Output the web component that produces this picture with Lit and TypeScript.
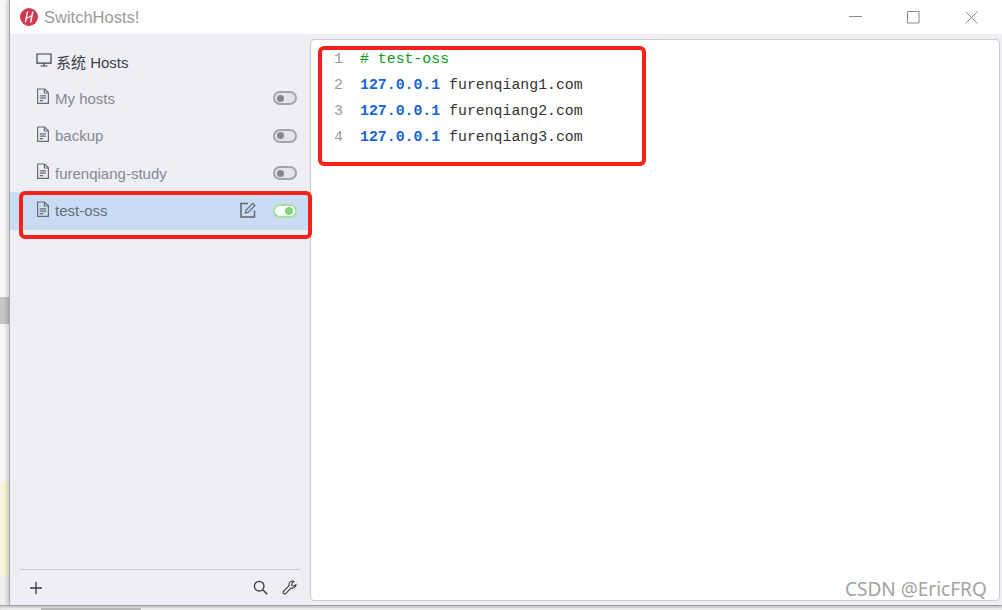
import { LitElement, html, css } from "lit";
import { customElement } from "lit/decorators.js";

const fileIcon = html`<svg class="ficon" viewBox="0 0 14 17" width="14" height="17" fill="none" stroke="currentColor" stroke-width="1.2"><path d="M1.6 1h7l3.8 3.800v10.600H1.600z"/><path d="M8.400 1v4h4M3.800 7.800h6.200M3.800 10.200h6.200M3.800 12.600h3.400"/></svg>`;

const hosts = [
  { name: "My hosts", on: false },
  { name: "backup", on: false },
  { name: "furenqiang-study", on: false },
  { name: "test-oss", on: true },
];

@customElement("app-root")
export class AppRoot extends LitElement {
  static styles = css`
    :host {
      display: block;
      position: relative;
      width: 1002px;
      height: 610px;
      overflow: hidden;
      background: #f1f1f1;
      font-family: "Liberation Sans", Arial, "Noto Sans CJK SC", sans-serif;
    }
    .desk { display: flex; height: 605px; }
    .strip { width: 9px; display: flex; flex-direction: column; flex: none; }
    .s1 { height: 297px; background: #f8f8f8; }
    .s2 { height: 27px; background: #c6c6c6; }
    .s3 { height: 158px; background: #f8f8f8; }
    .s4 { height: 94px; background: #f7f7dc; }
    .s5 { flex: 1; background: #efefef; }
    .window {
      flex: 1;
      display: flex;
      flex-direction: column;
      border-left: 1px solid #a8a8a8;
      background: #eeeff4;
      min-width: 0;
      box-shadow: -2px 0 4px rgba(0, 0, 0, 0.18);
    }
    .titlebar {
      height: 34px;
      flex: none;
      background: #fff;
      display: flex;
      align-items: center;
      padding-left: 10px;
      color: #9a9a9a;
      font-size: 16.5px;
    }
    .logo { margin-right: 6px; flex: none; }
    .tname { flex: 1; }
    .wctl { display: flex; align-items: center; color: #8a8a8a; }
    .wctl svg { display: block; }
    .wbtn { width: 58px; display: flex; justify-content: center; }
    .wbtn.close { width: 59px; margin-right: 1px; }
    .body { flex: 1; display: flex; min-height: 0; }
    .side {
      width: 300px;
      flex: none;
      display: flex;
      flex-direction: column;
      color: #868890;
    }
    .system {
      height: 36.5px;
      margin-top: 9px;
      padding-left: 26px;
      display: flex;
      align-items: center;
      color: #3e4048;
      font-size: 15px;
      gap: 4px;
    }
    .system svg { flex: none; margin-top: -3px; }
    .list { flex: 1; display: flex; flex-direction: column; }
    .row {
      height: 37.5px;
      padding: 0 13px 0 26px;
      display: flex;
      align-items: center;
      font-size: 15px;
    }
    .row.sel { background: #c9dcf3; color: #6a6e78; }
    .ficon { flex: none; color: #6a6c74; margin: -3px 5px 0 0; }
    .rname { flex: 1; }
    .edit { margin: -1px 17px 0 0; color: #5e6670; display: block; }
    .sw {
      width: 24px;
      height: 14px;
      box-sizing: border-box;
      border: 2px solid #a3a4a8;
      background: #e4e4e6;
      border-radius: 7px;
      display: flex;
      align-items: center;
      padding: 0 2px;
    }
    .sw i { width: 7px; height: 7px; border-radius: 50%; background: #86878c; }
    .sw.on {
      border-color: #a5e09a;
      background: #fff;
      justify-content: flex-end;
    }
    .sw.on i { background: #82d478; width: 8px; height: 8px; }
    .foot {
      margin: 0 10px;
      height: 35px;
      border-top: 1px solid #c9c9cc;
      display: flex;
      align-items: center;
      color: #3a3a3a;
      padding: 0 3px 0 9px;
      gap: 14px;
    }
    .foot .grow { flex: 1; }
    .foot svg { display: block; }
    .editor {
      flex: 1;
      margin: 5px 2px 4px 0;
      background: #fff;
      border: 1px solid #cbcbcf;
      border-radius: 4px;
      padding-top: 6px;
      font-family: "Liberation Mono", "DejaVu Sans Mono", monospace;
      font-size: 14.85px;
      min-width: 0;
    }
    .line { height: 26px; line-height: 26px; white-space: pre; color: #333; display: flex; }
    .num { width: 32px; text-align: right; color: #999; flex: none; margin-right: 17px; }
    .ip { color: #1565d8; font-weight: bold; margin-right: 8.9px; }
    .cm { color: #0a9a1a; }
    .under { height: 5px; background: #f1f1f1; border-top: 1px solid #a9a9a9; box-sizing: border-box; box-shadow: inset 0 2px 2px #d0d0d0; }
    .under i { display: block; margin: 2px 0 0 41px; width: 100px; height: 3px; background: #b8b8b8; }
    .red {
      position: absolute;
      box-sizing: border-box;
      border: 4px solid #f6221a;
      border-radius: 6px;
      pointer-events: none;
    }
    .r1 { left: 318px; top: 46px; width: 328px; height: 120px; }
    .r2 { left: 19px; top: 191px; width: 293px; height: 48px; }
    .mark {
      position: absolute;
      left: 845px;
      top: 576px;
      font-family: "Noto Sans", sans-serif;
      font-size: 19px;
      color: #a3a3a3;
      white-space: nowrap;
    }
  `;

  render() {
    const lines = [1, 2, 3].map((n) => `furenqiang${n}.com`);
    return html`
      <div class="desk">
        <div class="strip">
          <div class="s1"></div><div class="s2"></div><div class="s3"></div><div class="s4"></div><div class="s5"></div>
        </div>
        <div class="window">
          <div class="titlebar">
            <svg class="logo" width="18" height="18" viewBox="0 0 18 18">
              <circle cx="9" cy="9" r="9" fill="#cf3a50"/>
              <path d="M7.600 3.400 5.400 14.400M12.800 3.600l-2.200 11M5.200 11l7.800-4" fill="none" stroke="#fff" stroke-width="1.400"/>
            </svg>
            <span class="tname">SwitchHosts!</span>
            <div class="wctl">
              <div class="wbtn"><svg width="13" height="13" viewBox="0 0 13 13"><path d="M0 5.500h13" stroke="currentColor" fill="none"/></svg></div>
              <div class="wbtn"><svg width="13" height="13" viewBox="0 0 13 13"><path d="M.5.5h11.500v11.500H.5z" stroke="currentColor" fill="none"/></svg></div>
              <div class="wbtn close"><svg width="13" height="13" viewBox="0 0 13 13"><path d="M.5.5l12 12M12.500.5l-12 12" stroke="currentColor" fill="none"/></svg></div>
            </div>
          </div>
          <div class="body">
            <div class="side">
              <div class="system">
                <svg width="16" height="14" viewBox="0 0 16 14" fill="none" stroke="currentColor" stroke-width="1.2"><path d="M1 1h14v9.200H1zM8 10.200v2.600M4.500 13h7"/></svg>
                <span>系统 Hosts</span>
              </div>
              <div class="list">
                ${hosts.map(
                  (h) => html`<div class="row ${h.on ? "sel" : ""}">
                    ${fileIcon}
                    <span class="rname">${h.name}</span>
                    ${h.on
                      ? html`<svg class="edit" width="16" height="16" viewBox="0 0 16 16" fill="none" stroke="currentColor" stroke-width="1.500"><path d="M8 1.500H1v13.500h13.500V8.500"/><path d="M5.500 11l.6-3L12.800 1.300l2.100 2.100L8.300 10.300z" stroke-width="1.200"/></svg>`
                      : ""}
                    <div class="sw ${h.on ? "on" : ""}"><i></i></div>
                  </div>`
                )}
              </div>
              <div class="foot">
                <svg width="14" height="14" viewBox="0 0 14 14"><path d="M7 1v12M1 7h12" stroke="currentColor" stroke-width="1.300" fill="none"/></svg>
                <div class="grow"></div>
                <svg width="15" height="15" viewBox="0 0 15 15" fill="none" stroke="currentColor" stroke-width="1.300"><circle cx="6.200" cy="6.200" r="4.800"/><path d="M9.700 9.700l4.500 4.500" stroke-width="1.500"/></svg>
                <svg width="15" height="15" viewBox="0 0 15 15" fill="none" stroke="currentColor" stroke-width="1.100"><path d="M10.500 1a3.600 3.600 0 0 0-3.400 4.700L1.200 11.600a1.500 1.500 0 0 0 0 1.300l.9.900a1.500 1.500 0 0 0 1.300 0L9.300 7.900A3.600 3.600 0 0 0 14 4.500l-2.300 1.700L9.500 5l.8-2.500L12 1.400A3.600 3.600 0 0 0 10.500 1z"/></svg>
              </div>
            </div>
            <div class="editor">
              <div class="line"><span class="num">1</span><span class="cm"># test-oss</span></div>
              ${lines.map(
                (l, i) => html`<div class="line"><span class="num">${i + 2}</span><span class="ip">127.0.0.1</span><span>${l}</span></div>`
              )}
            </div>
          </div>
        </div>
      </div>
      <div class="under"><i></i></div>
      <div class="red r1"></div>
      <div class="red r2"></div>
      <div class="mark">CSDN @EricFRQ</div>
    `;
  }
}
